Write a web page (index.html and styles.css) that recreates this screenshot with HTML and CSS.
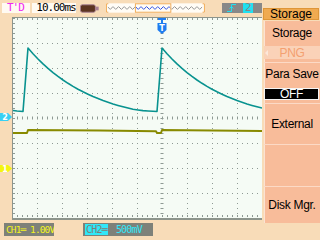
FILE: index.html
```html
<!DOCTYPE html>
<html lang="en">
<head>
    <meta charset="UTF-8">
    <meta name="viewport" content="width=device-width, initial-scale=1.0">
    <title>Scope - Storage</title>
    <link rel="stylesheet" href="styles.css">
</head>
<body>
<div class="scope">
    <div class="main">
        <div class="topbar">
            <span class="status">T'D</span>
            <span class="timebase">10.00ms</span>
            <svg class="battery" viewBox="0 0 20 9">
                <rect x="0.5" y="0.5" width="16" height="8" rx="2" fill="#5C3420" stroke="#A88094"/>
                <rect x="17" y="2.5" width="3" height="4" fill="#A88094"/>
            </svg>
            <svg class="memory" viewBox="0 0 106 10">
                <defs>
                    <pattern id="gw" width="6" height="10" patternUnits="userSpaceOnUse">
                        <path d="M0 5 Q1.5 2 3 5 T6 5" fill="none" stroke="#8C8C8C"/>
                    </pattern>
                    <pattern id="bw" width="6" height="10" patternUnits="userSpaceOnUse">
                        <path d="M0 5 Q1.5 2 3 5 T6 5" fill="none" stroke="#2044E0"/>
                    </pattern>
                </defs>
                <rect width="106" height="10" fill="#FFFCF6"/>
                <rect x="2" width="29" height="10" fill="url(#gw)"/>
                <rect x="32" width="37" height="10" fill="url(#bw)"/>
                <rect x="70" width="33" height="10" fill="url(#gw)"/>
                <path d="M2.5 0.5H0.5V9.5H2.5M103.5 0.5H105.5V9.5H103.5" fill="none" stroke="#F0A850"/>
                <rect x="31.5" y="0.5" width="38" height="9" fill="none" stroke="#F0A850"/>
            </svg>
            <span class="trig">
                <svg class="edge" viewBox="0 0 9 10">
                    <path d="M0 8.5H4.5V1.5H9M2.5 5.5L4.5 3.5L6.5 5.5" fill="none" stroke="#20E0F0"/>
                </svg>
                <span class="src">2</span>
            </span>
        </div>

        <svg class="display" viewBox="0 17 262 203">
            <rect x="12" y="17" width="250" height="203" fill="#F5FBF5"/>

            <!-- dotted grid -->
            <g stroke="#8E9A94" stroke-dasharray="1 4">
                <line x1="37.5" y1="18" x2="37.5" y2="219"/>
                <line x1="62.5" y1="18" x2="62.5" y2="219"/>
                <line x1="87.5" y1="18" x2="87.5" y2="219"/>
                <line x1="112.5" y1="18" x2="112.5" y2="219"/>
                <line x1="137.5" y1="18" x2="137.5" y2="219"/>
                <line x1="187.5" y1="18" x2="187.5" y2="219"/>
                <line x1="212.5" y1="18" x2="212.5" y2="219"/>
                <line x1="237.5" y1="18" x2="237.5" y2="219"/>
                <line x1="17" y1="43.5" x2="262" y2="43.5"/>
                <line x1="17" y1="68.5" x2="262" y2="68.5"/>
                <line x1="17" y1="93.5" x2="262" y2="93.5"/>
                <line x1="17" y1="143.5" x2="262" y2="143.5"/>
                <line x1="17" y1="168.5" x2="262" y2="168.5"/>
                <line x1="17" y1="193.5" x2="262" y2="193.5"/>
            </g>

            <!-- centre and edge ticks -->
            <g stroke="#8E9A94" stroke-dasharray="1 4">
                <line x1="162" y1="18" x2="162" y2="219" stroke-width="3"/>
                <line x1="17" y1="118" x2="262" y2="118" stroke-width="3"/>
                <line x1="14" y1="18" x2="14" y2="219" stroke-width="2"/>
                <line x1="17" y1="19" x2="262" y2="19" stroke-width="2"/>
                <line x1="17" y1="216" x2="262" y2="216" stroke-width="2"/>
            </g>
            <path d="M12.5 17V219M12 17.5H262" fill="none" stroke="#8C948C"/>
            <path d="M12 219H262" fill="none" stroke="#8C948C" stroke-width="2"/>

            <!-- CH1 -->
            <path class="trace" stroke="#888A00" stroke-width="2"
                  d="M13 133H27L28 130L100 130.5L156 131.2L157 133H161L162 130L262 131"/>

            <!-- CH2 -->
            <path class="trace" stroke="#08928F" stroke-width="1.6"
                  d="M13 110.5L17 111L23 111.5L28 48L33 53.7L38 59L43 63.9L48 68.4L53 72.6L58 76.4L63 80L68 83.3L73 86.4L78 89.2L83 91.8L88 94.2L93 96.5L98 98.5L103 100.5L108 102.2L113 103.9L118 105.4L123 106.8L128 108.1L133 109.3L138 110L143 110.6L148 111L153 111.3L157 111.5L162 48L167 53.7L172 59L177 63.9L182 68.4L187 72.6L192 76.4L197 80L202 83.3L207 86.4L212 89.2L217 91.8L222 94.2L227 96.5L232 98.5L237 100.5L242 102.2L247 103.9L252 105.4L257 106.8L262 108.1"/>

            <!-- channel markers -->
            <path d="M0 113H8L12 117L8 121H0Z" fill="#38D0F4"/>
            <text class="mark" x="5" y="120">2</text>
            <path d="M0 165H8L12 168.5L8 172H0Z" fill="#F4F410"/>
            <text class="mark" x="5" y="171.5">1</text>

            <!-- trigger position -->
            <path d="M158 18H166V20H163V23H161V20H158Z" fill="#1E7CF0"/>
            <path d="M157.5 23H166.5V30L162 34L157.5 30Z" fill="#1E7CF0"/>
            <text class="mark trig-t" x="162" y="30.5">T</text>
        </svg>

        <div class="statusbar">
            <span class="ch ch1">CH1<span class="cpl">═</span> 1.00V</span>
            <span class="ch ch2"><span class="sel">CH2═</span><span class="val">500mV</span></span>
        </div>
    </div>

    <div class="menu">
        <div class="menu-title">Storage</div>
        <div class="menu-body">
            <div class="item item-value">
                <span class="label">Storage</span>
                <span class="option"><span class="arrow"></span><span class="option-text">PNG</span></span>
            </div>
            <div class="item item-value">
                <span class="label">Para Save</span>
                <span class="toggle">OFF</span>
            </div>
            <div class="item">External</div>
            <div class="item item-tall"></div>
            <div class="item item-last">Disk Mgr.</div>
        </div>
    </div>
</div>
</body>
</html>
```

FILE: styles.css
```css
body {
    margin: 0;
    width: 320px;
    height: 240px;
    overflow: hidden;
    background: #F8DCB8;
    font-family: "Liberation Sans", Arial, sans-serif;
}
.scope {
    display: flex;
    height: 240px;
}
.main {
    width: 262px;
    overflow: hidden;
    display: flex;
    flex-direction: column;
}

/* top status line */
.topbar {
    height: 17px;
    box-sizing: border-box;
    padding-top: 3px;
    display: flex;
    align-items: flex-start;
    font-family: "DejaVu Sans Mono", monospace;
    font-size: 11px;
    line-height: 10px;
    letter-spacing: -1px;
    flex-shrink: 0;
}
.status, .timebase {
    height: 10px;
    box-sizing: border-box;
    background: #FFFAF2;
}
.status {
    margin-left: 2px;
    width: 30px;
    padding-left: 5px;
    color: #F028F0;
}
.timebase {
    margin-left: 2px;
    width: 47px;
    padding-left: 4px;
    color: #000;
}
.battery {
    margin-left: 4px;
    margin-top: 1px;
    width: 20px;
    height: 9px;
}
.memory {
    margin-left: 7px;
    width: 106px;
    height: 10px;
}
.trig {
    margin-left: 17px;
    width: 40px;
    height: 10px;
    flex-shrink: 0;
    background: #888888;
    display: flex;
    align-items: center;
}
.edge {
    margin-left: 5px;
    width: 9px;
    height: 10px;
}
.src {
    margin-left: 7px;
    height: 10px;
    padding: 0 2px;
    background: #20E0F0;
    color: #888888;
}

/* graticule */
.display {
    display: block;
    width: 262px;
    height: 203px;
    flex-shrink: 0;
}
.trace {
    fill: none;
    stroke-linejoin: round;
}
.mark {
    font-family: "DejaVu Sans", sans-serif;
    font-size: 8px;
    font-weight: bold;
    fill: #ffffff;
    text-anchor: middle;
}

/* channel readouts */
.statusbar {
    height: 20px;
    box-sizing: border-box;
    padding-top: 3px;
    display: flex;
    align-items: flex-start;
    font-family: "DejaVu Sans Mono", monospace;
    font-size: 10px;
    line-height: 13px;
    letter-spacing: -0.8px;
}
.ch {
    height: 13px;
    background: #7E8179;
    box-sizing: border-box;
    white-space: nowrap;
    overflow: hidden;
}
.ch1 {
    margin-left: 4px;
    width: 50px;
    padding-left: 2px;
    font-size: 9.5px;
    letter-spacing: -0.9px;
    color: #F4F420;
}
.ch2 {
    margin-left: 29px;
    width: 70px;
    padding-left: 2px;
    color: #30E8F8;
}
.sel {
    background: #30E8F8;
    color: #7E8179;
    padding: 0 1px;
}
.val {
    margin-left: 8px;
}

/* soft menu */
.menu {
    width: 58px;
    padding-top: 8px;
    display: flex;
    flex-direction: column;
}
.menu-title {
    margin: 0 1px;
    height: 12px;
    background: #F0AA50;
    box-shadow: inset 0 0 0 1px #DE9638;
    text-align: center;
    font-size: 12px;
    line-height: 12px;
}
.menu-body {
    margin-top: 1px;
    margin-left: 2px;
    height: 202px;
    background: #F8BC9A;
    box-shadow: inset 1px 0 #FCE2D2;
    display: flex;
    flex-direction: column;
}
.item {
    height: 41px;
    box-sizing: border-box;
    border-top: 1px solid #FCDAC6;
    display: flex;
    flex-direction: column;
    align-items: center;
    justify-content: center;
    font-size: 12px;
    line-height: 14px;
    letter-spacing: -0.3px;
    white-space: nowrap;
}
.item:first-child {
    border-top: none;
}
.item-value {
    justify-content: flex-start;
    padding-top: 4px;
}
.item:first-child.item-value {
    padding-top: 5px;
}
.item-tall {
    height: 42px;
}
.item-last {
    height: 37px;
}
.option {
    align-self: stretch;
    margin-top: 6px;
    height: 13px;
    background: #FAD2B8;
    display: flex;
    align-items: center;
}
.arrow {
    width: 0;
    height: 0;
    border: 3px solid transparent;
    border-right-color: #FCE8DA;
    border-left-width: 0;
    margin-left: 1px;
}
.option-text {
    flex: 1;
    padding-right: 4px;
    text-align: center;
    color: #F4A070;
}
.toggle {
    align-self: stretch;
    margin: 7px 1px 0 0;
    height: 12px;
    box-sizing: border-box;
    border: 1px solid #F4F4F4;
    background: #000;
    color: #fff;
    text-align: center;
    line-height: 10px;
}
```
